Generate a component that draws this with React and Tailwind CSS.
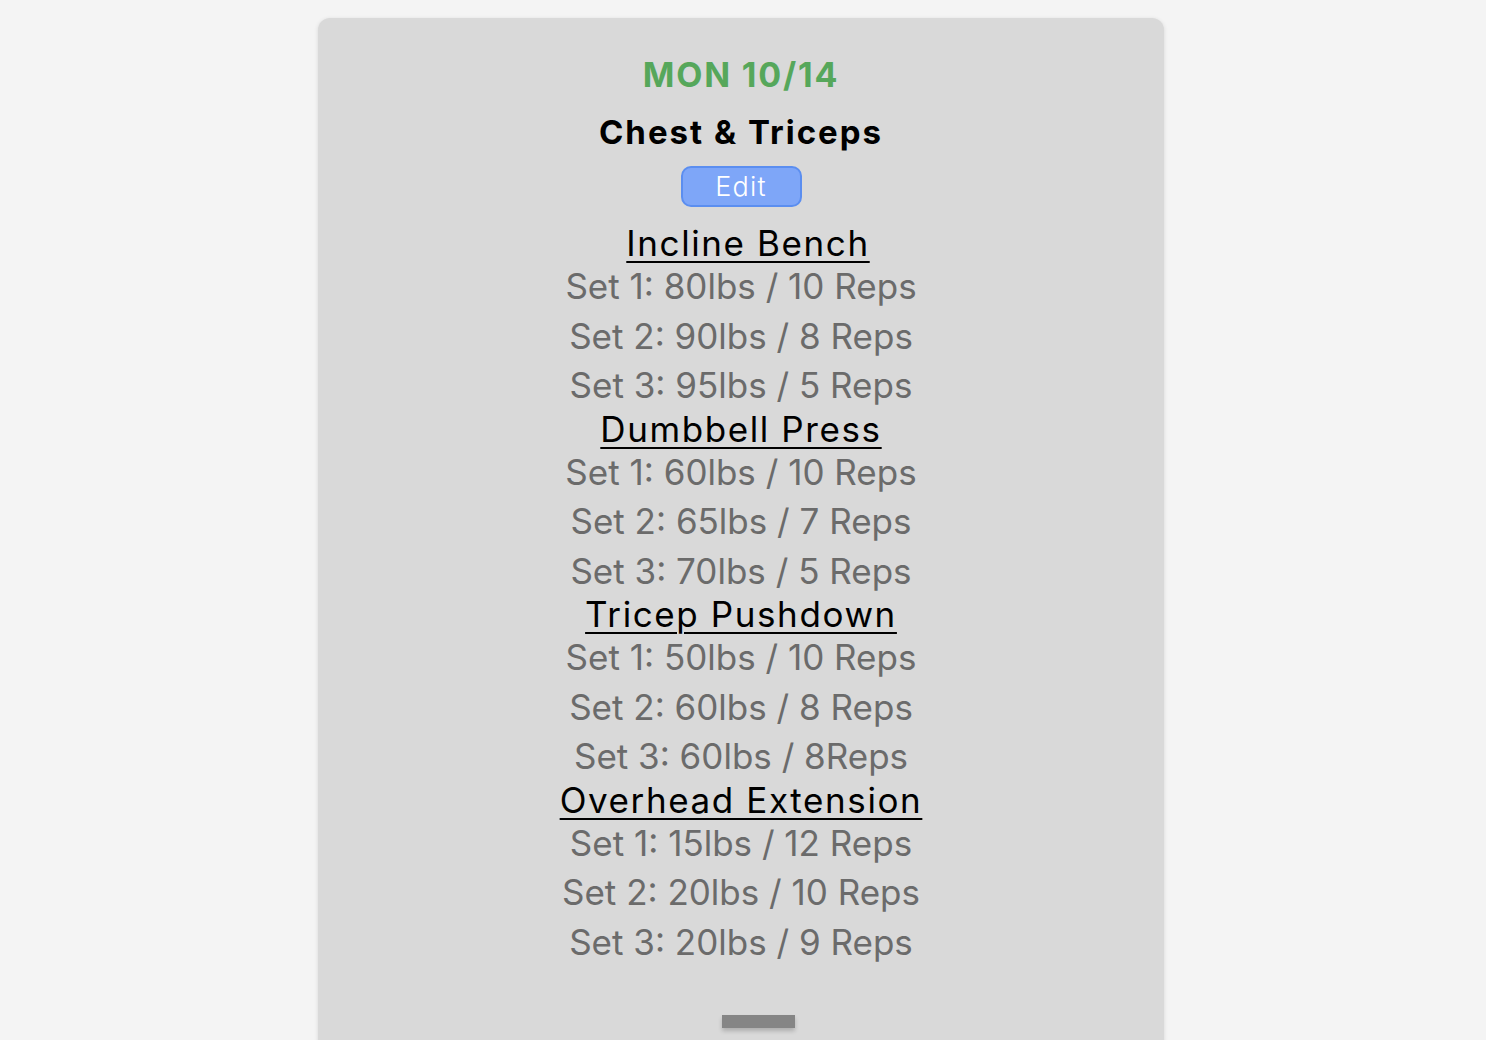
import React from 'react'

const workout = [
  {
    name: 'Incline Bench',
    sets: ['Set 1: 80lbs / 10 Reps', 'Set 2: 90lbs / 8 Reps', 'Set 3: 95lbs / 5 Reps'],
  },
  {
    name: 'Dumbbell Press',
    sets: ['Set 1: 60lbs / 10 Reps', 'Set 2: 65lbs / 7 Reps', 'Set 3: 70lbs / 5 Reps'],
  },
  {
    name: 'Tricep Pushdown',
    sets: ['Set 1: 50lbs / 10 Reps', 'Set 2: 60lbs / 8 Reps', 'Set 3: 60lbs / 8Reps'],
  },
  {
    name: 'Overhead Extension',
    sets: ['Set 1: 15lbs / 12 Reps', 'Set 2: 20lbs / 10 Reps', 'Set 3: 20lbs / 9 Reps'],
  },
]

const Exercise = ({ name, sets, first }) => (
  <div className="flex flex-col items-center">
    <h3
      className={
        first
          ? 'ml-[14px] h-[37px] leading-[37px] text-[35px] tracking-[1.6px] text-black underline decoration-2 underline-offset-[5px]'
          : 'h-[37px] leading-[37px] text-[35px] tracking-[1.6px] text-black underline decoration-2 underline-offset-[5px]'
      }
    >
      {name}
    </h3>
    {sets.map((s) => (
      <p key={s} className="leading-[49.5px] text-[35px] text-[#6b6b6b]">
        {s}
      </p>
    ))}
  </div>
)

export default function App() {
  return (
    <div className="min-h-[1040px] bg-[#f4f4f4] font-['Inter',sans-serif] overflow-hidden">
      <div className="ml-[318px] mt-[18px] w-[846px] h-[1100px] rounded-[12px] bg-[#d9d9d9] shadow-[0_1px_4px_rgba(0,0,0,0.12)] flex flex-col items-center pt-[33px]">
        <h1 className="leading-[48px] text-[34px] tracking-[1.8px] font-bold text-[#56a75b]">MON 10/14</h1>
        <h2 className="mt-[9px] leading-[48px] text-[33px] tracking-[2px] font-bold text-black">Chest &amp; Triceps</h2>
        <button className="mt-[10px] w-[121px] h-[41px] rounded-[10px] bg-[#7ea6f8] border-2 border-[#5b8ef0] text-white text-[27px] tracking-[1.2px] font-light leading-none">
          Edit
        </button>
        <div className="mt-[18px] flex flex-col items-center">
          {workout.map((ex, i) => (
            <Exercise key={ex.name} first={i === 0} {...ex} />
          ))}
        </div>
        <div className="self-start ml-[404px] mt-[48px] w-[73px] h-[13px] bg-[#858585] shadow-[0_3px_4px_rgba(0,0,0,0.2)]" />
      </div>
    </div>
  )
}
